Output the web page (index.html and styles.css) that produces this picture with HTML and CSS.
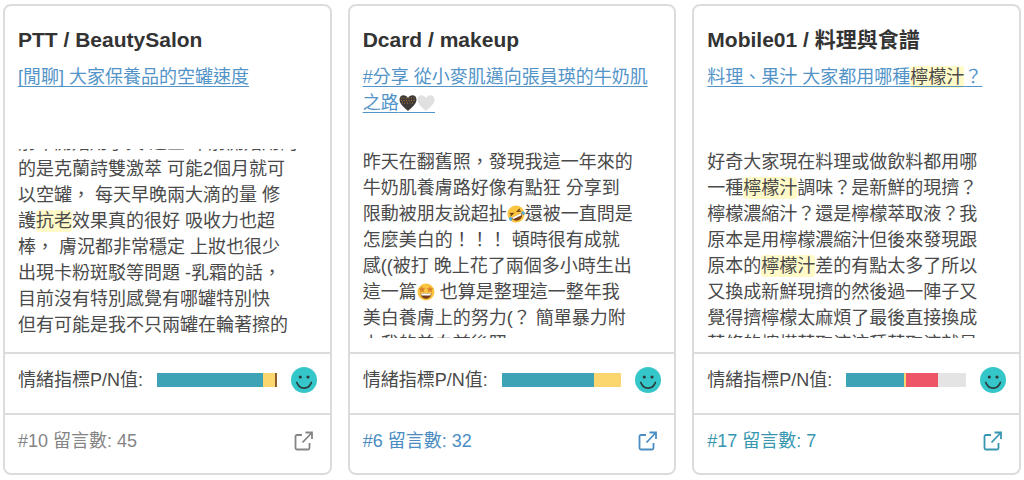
FILE: index.html
```html
<!DOCTYPE html>
<html lang="zh-Hant">
<head>
    <meta charset="UTF-8">
    <meta name="viewport" content="width=device-width, initial-scale=1.0">
    <title>熱門文章</title>
    <link rel="stylesheet" href="styles.css">
</head>

<body>
    <!-- 共用圖示 -->
    <svg class="sprite" aria-hidden="true">
        <symbol id="smile" viewBox="0 0 26 26">
            <circle cx="13" cy="13" r="13" fill="#34c6c8"/>
            <circle cx="9.300" cy="10" r="1.600" fill="#2d3a3c"/>
            <circle cx="17" cy="10" r="1.600" fill="#2d3a3c"/>
            <path d="M5.800 15.500c2.800 7.500 11.800 7.500 14.600 0" fill="none" stroke="#2d3a3c" stroke-width="1.700" stroke-linecap="round"/>
        </symbol>
        <symbol id="open" viewBox="0 0 20 20">
            <path d="M8 4H3Q1.500 4 1.500 5.500V17Q1.500 18.500 3 18.500H14Q15.500 18.500 15.500 17V12M11.500 1.500H18V8M18 1.500L8.500 11.500" fill="none" stroke="currentColor" stroke-width="1.800"/>
        </symbol>
        <symbol id="heart" viewBox="0 0 18 18">
            <path d="M9 17C6 14 .5 10.500 .5 5.500C.5 0 7 0 9 4C11 0 17.500 0 17.500 5.500C17.500 10.500 12 14 9 17Z"/>
        </symbol>
        <symbol id="heart-dotted" viewBox="0 0 18 18">
            <path d="M9 17C6 14 .5 10.500 .5 5.500C.5 0 7 0 9 4C11 0 17.500 0 17.500 5.500C17.500 10.500 12 14 9 17Z"/>
            <path d="M2 4h14M2 6.500h14M3 9h12" fill="none" stroke="#b8793a" stroke-width="1" stroke-dasharray="1 1.500"/>
        </symbol>
        <symbol id="rofl" viewBox="0 0 18 18">
            <g transform="rotate(-25 9 9)">
                <circle cx="9" cy="9" r="8.500" fill="#fbc540"/>
                <path d="M3.500 6l3 1.200-3 1.200M14.500 6l-3 1.200 3 1.200" fill="none" stroke="#6b4016" stroke-width="1.200"/>
                <path d="M3.500 10.500h11c-.5 7-10.500 7-11 0z" fill="#7a3f16"/>
                <path d="M4 10.500h10l-.6 2H4.600z" fill="#fff"/>
                <path d="M3 9c-2.500 0-3.500 3-1.500 4S4 11 3 9zM15 9c2.500 0 3.500 3 1.500 4S14 11 15 9z" fill="#55acd8"/>
            </g>
        </symbol>
        <symbol id="star-eyes" viewBox="0 0 18 18">
            <circle cx="9" cy="9" r="8.500" fill="#fbc540"/>
            <path d="M5 3l1 2.300 2.500.2-1.900 1.600.6 2.400L5 8.200 2.800 9.500l.6-2.400-1.900-1.600L4 5.300zM13 3l1 2.300 2.500.2-1.900 1.600.6 2.400L13 8.200l-2.200 1.300.6-2.400-1.900-1.600 2.500-.2z" fill="#d9822b"/>
            <path d="M3.500 10.500h11c-.5 7-10.500 7-11 0z" fill="#7a3f16"/>
            <path d="M4 10.500h10l-.6 2H4.600z" fill="#fff"/>
        </symbol>
    </svg>

    <main class="cards">
        <article class="card">
            <div class="card-body">
                <h2>PTT / BeautySalon</h2>
                <a class="title" href="#ptt">[閒聊] 大家保養品的空罐速度</a>
                <div class="excerpt scrolled">
                    <p>前年開始用了又 之三 年前開始用的<br>的是克蘭詩雙激萃 可能2個月就可<br>以空罐， 每天早晚兩大滴的量 修<br>護<mark>抗老</mark>效果真的很好 吸收力也超<br>棒， 膚況都非常穩定 上妝也很少<br>出現卡粉斑駁等問題 -乳霜的話，<br>目前沒有特別感覺有哪罐特別快<br>但有可能是我不只兩罐在輪著擦的</p>
                </div>
            </div>
            <div class="mood">
                <span>情緒指標P/N值:</span>
                <div class="bar">
                    <span class="positive" style="width: 89%"></span>
                    <span class="neutral" style="width: 10%"></span>
                    <span class="dark" style="width: 1%"></span>
                </div>
                <svg class="face" role="img" aria-label="正面"><use href="#smile"/></svg>
            </div>
            <div class="card-footer gray">
                <span>#10 留言數: 45</span>
                <a href="#ptt" aria-label="開啟文章"><svg class="open"><use href="#open"/></svg></a>
            </div>
        </article>

        <article class="card">
            <div class="card-body">
                <h2>Dcard / makeup</h2>
                <a class="title" href="#dcard">#分享 從小麥肌邁向張員瑛的牛奶肌<br>之路<svg class="emoji black"><use href="#heart-dotted"/></svg><svg class="emoji white"><use href="#heart"/></svg></a>
                <div class="excerpt">
                    <p>昨天在翻舊照，發現我這一年來的<br>牛奶肌養膚路好像有點狂 分享到<br>限動被朋友說超扯<svg class="emoji"><use href="#rofl"/></svg>還被一直問是<br>怎麼美白的！！！ 頓時很有成就<br>感((被打 晚上花了兩個多小時生出<br>這一篇<svg class="emoji"><use href="#star-eyes"/></svg> 也算是整理這一整年我<br>美白養膚上的努力(？ 簡單暴力附<br>上我的美白前後照</p>
                </div>
            </div>
            <div class="mood">
                <span>情緒指標P/N值:</span>
                <div class="bar">
                    <span class="positive" style="width: 77%"></span>
                    <span class="neutral" style="width: 23%"></span>
                </div>
                <svg class="face" role="img" aria-label="正面"><use href="#smile"/></svg>
            </div>
            <div class="card-footer blue">
                <span>#6 留言數: 32</span>
                <a href="#dcard" aria-label="開啟文章"><svg class="open"><use href="#open"/></svg></a>
            </div>
        </article>

        <article class="card">
            <div class="card-body">
                <h2>Mobile01 / 料理與食譜</h2>
                <a class="title" href="#mobile01">料理、果汁 大家都用哪種<mark>檸檬汁</mark>？</a>
                <div class="excerpt">
                    <p>好奇大家現在料理或做飲料都用哪<br>一種<mark>檸檬汁</mark>調味？是新鮮的現擠？<br>檸檬濃縮汁？還是檸檬萃取液？我<br>原本是用檸檬濃縮汁但後來發現跟<br>原本的<mark>檸檬汁</mark>差的有點太多了所以<br>又換成新鮮現擠的然後過一陣子又<br>覺得擠檸檬太麻煩了最後直接換成<br>萃條的檸檬萃取液這種萃取液就是</p>
                </div>
            </div>
            <div class="mood">
                <span>情緒指標P/N值:</span>
                <div class="bar">
                    <span class="positive" style="width: 48%"></span>
                    <span class="neutral" style="width: 2%"></span>
                    <span class="negative" style="width: 27%"></span>
                </div>
                <svg class="face" role="img" aria-label="正面"><use href="#smile"/></svg>
            </div>
            <div class="card-footer teal">
                <span>#17 留言數: 7</span>
                <a href="#mobile01" aria-label="開啟文章"><svg class="open"><use href="#open"/></svg></a>
            </div>
        </article>
    </main>
</body>
</html>
```
FILE: styles.css
```css
* {
    box-sizing: border-box;
}

body {
    margin: 0;
    background: #fff;
    color: #4a4a4a;
    font-family: "Liberation Sans", "Noto Sans CJK TC", sans-serif;
    font-size: 18px;
    line-height: 26px;
}

.sprite {
    display: none;
}

.cards {
    display: grid;
    grid-template-columns: repeat(3, minmax(0, 1fr));
    gap: 16px;
    padding: 4px 3px;
}

.card {
    border: 2px solid #dcdcdc;
    border-radius: 8px;
}

.card-body {
    padding: 20px 13px 14px;
}

.card h2 {
    margin: 0 0 10px;
    color: #333;
    font-size: 21px;
    line-height: 28px;
}

.title {
    display: block;
    height: 85px;
    color: #5294c8;
    text-decoration-skip-ink: none;
    text-underline-offset: 3px;
    white-space: nowrap;
}

mark {
    padding: 1px 0;
    background: #fffac8;
    color: #4a4a4a;
    border-radius: 3px;
}

.excerpt {
    height: 189px;
    overflow: hidden;
    white-space: nowrap;
}

.excerpt p {
    margin: 0;
}

/* 已捲到內文底部 */
.scrolled {
    display: flex;
    flex-direction: column;
    justify-content: flex-end;
}

.emoji {
    width: 18px;
    height: 18px;
    vertical-align: -3px;
}

/* 底線延伸到表情符號下方 */
.title .emoji {
    height: 19px;
    vertical-align: -4px;
    border-bottom: 1px solid #5294c8;
}

.black {
    fill: #3d3a38;
}

.white {
    fill: #e0e0e0;
}

/* 情緒指標 */
.mood {
    display: flex;
    align-items: center;
    gap: 14px;
    height: 61px;
    padding: 0 13px 8px;
    border-top: 2px solid #dcdcdc;
    white-space: nowrap;
}

.bar {
    display: flex;
    flex: 1;
    height: 14px;
    background: #e4e4e4;
}

.positive {
    background: #3fa3b6;
}

.neutral {
    background: #fbd56e;
}

.negative {
    background: #ee5567;
}

.dark {
    background: #8c5a2b;
}

.face {
    width: 26px;
    height: 26px;
}

.card-footer {
    display: flex;
    align-items: center;
    justify-content: space-between;
    height: 60px;
    padding: 0 16px 6px 13px;
    border-top: 2px solid #dcdcdc;
}

.card-footer a {
    display: flex;
    color: inherit;
}

.open {
    width: 20px;
    height: 20px;
}

.gray {
    color: #858585;
}

.blue {
    color: #4b8dc3;
}

.teal {
    color: #3897b0;
}
```
